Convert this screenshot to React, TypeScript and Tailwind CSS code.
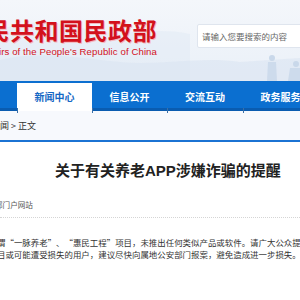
import React from "react";

const cjk = { fontFamily: '"Noto Sans CJK SC", "Liberation Sans", sans-serif' };

function NavItem({ label, active, w }: { label: string; active?: boolean; w: string }) {
  return (
    <div className={`relative shrink-0 ${w} h-[28px] mt-[2px] flex items-center justify-center ${active ? "bg-white" : ""}`}>
      <span className={`text-[10px] font-bold leading-none ${active ? "text-[#1467c4]" : "text-white"}`}>{label}</span>
      <span className="absolute left-0 bottom-[-2px] w-px h-[5px] bg-[#3b6fa6]" />
    </div>
  );
}

function OQ() {
  return <span className="inline-block w-[1em] text-right">“</span>;
}
function CQ() {
  return <span className="inline-block w-[1em] text-left">”</span>;
}

export default function App() {
  return (
    <div lang="zh-CN" className="w-[300px] h-[300px] overflow-hidden bg-white" style={cjk}>
      {/* header */}
      <div className="relative h-[81px] bg-gradient-to-b from-[#f4f7fb] to-[#eaf0f8] flex overflow-hidden">
        <svg className="absolute inset-0" width="300" height="81" viewBox="0 0 300 81">
          <path d="M0 30 C30 18 60 22 90 30 C120 38 150 26 190 34 L190 81 L0 81 Z" fill="#e3ebf5" opacity="0.6" />
          <path d="M0 60 C40 50 80 58 120 62 C160 66 200 56 240 62 L300 58 L300 81 L0 81 Z" fill="#dbe5f2" opacity="0.6" />
          <circle cx="272" cy="58" r="3" fill="#c9d8ea" />
          <path d="M268 62 L276 62 L277 81 L267 81 Z" fill="#cddbec" />
          <circle cx="296" cy="64" r="3" fill="#c9d8ea" />
          <path d="M290 68 L300 68 L300 81 L288 81 Z" fill="#cddbec" />
        </svg>
        <div className="relative w-[157px] shrink-0 pt-[17px] flex flex-col items-end">
          <div className="shrink-0 whitespace-nowrap text-[24px] leading-[26px] font-bold text-[#d3111c] tracking-[0.5px] [text-shadow:1px_1px_0_#f4b9bd]">
            中华人民共和国民政部
          </div>
          <div
            className="shrink-0 whitespace-nowrap mt-[3px] text-[9.6px] leading-[12px] text-[#d3111c] tracking-[0.1px]"
            style={{ fontFamily: '"Liberation Sans", sans-serif' }}
          >
            Ministry of Civil Affairs of the People's Republic of China
          </div>
        </div>
        <div className="relative ml-[40px] mt-[24px] w-[130px] h-[24px] shrink-0 bg-white border border-[#dfe5ee] rounded-[2px] flex items-center pl-[4px]">
          <span className="text-[8.5px] text-[#666] whitespace-nowrap">请输入您要搜索的内容</span>
        </div>
      </div>

      {/* nav */}
      <div className="h-[30px] bg-[#0b6fd0] border-b-[3px] border-[#0a5cb0] flex pl-[17px]">
        <NavItem label="新闻中心" active w="w-[75px]" />
        <NavItem label="信息公开" w="w-[75px]" />
        <NavItem label="交流互动" w="w-[76px]" />
        <NavItem label="政务服务" w="w-[75px]" />
      </div>

      {/* breadcrumb */}
      <div className="h-[31px] bg-[#f7f9fd] border-b-[2px] border-[#1b73d3] flex items-center">
        <span className="ml-[-9px] whitespace-nowrap text-[9px] text-[#333] leading-none">新闻 &gt; 正文</span>
      </div>

      {/* title */}
      <div className="mt-[19px] pl-[55px] whitespace-nowrap text-[15px] leading-[20px] font-bold text-[#222]" style={{ fontFamily: '"Liberation Sans", "Noto Sans CJK SC", sans-serif' }}>
        关于有关养老APP涉嫌诈骗的提醒
      </div>

      {/* source */}
      <div className="mt-[18px] ml-[-5px] whitespace-nowrap text-[7.6px] leading-[12px] text-[#555]">部门户网站</div>

      <div className="mt-[6px] border-t border-dotted border-[#d5d5d5]" />

      {/* body */}
      <div className="mt-[18px] ml-[-3px] text-[8.45px] leading-[12px] text-[#333] whitespace-nowrap">
        <div>
          谓<OQ />一脉养老<CQ />、<OQ />惠民工程<CQ />项目，未推出任何类似产品或软件。请广大公众提高警惕
        </div>
        <div>目或可能遭受损失的用户，建议尽快向属地公安部门报案，避免造成进一步损失。如</div>
      </div>
    </div>
  );
}
